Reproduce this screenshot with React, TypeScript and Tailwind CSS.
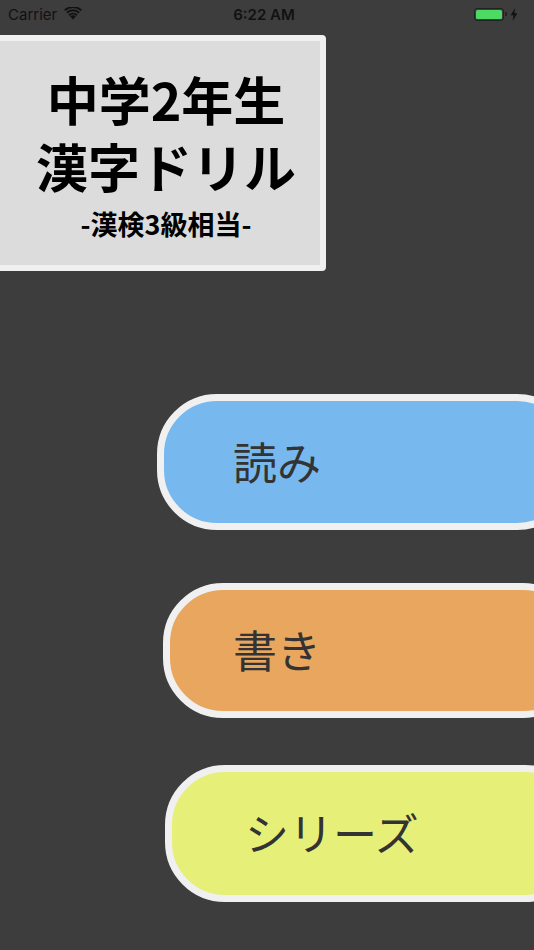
import React from "react";

const jp = { fontFamily: '"Noto Sans CJK JP", "Noto Sans", sans-serif' };
const sys = { fontFamily: 'Inter, "Liberation Sans", sans-serif' };

function Wifi() {
  return (
    <svg width="18" height="13" viewBox="0 0 18 13">
      <path d="M9 12.6 L6.2 9.5 A4 4 0 0 1 11.8 9.5 Z" fill="#111" />
      <path d="M4.4 7.5 A6.6 6.6 0 0 1 13.6 7.5 L12.3 8.9 A4.8 4.8 0 0 0 5.7 8.9 Z" fill="#111" />
      <path d="M2.2 5.1 A9.8 9.8 0 0 1 15.8 5.1 L14.5 6.5 A8 8 0 0 0 3.5 6.5 Z" fill="#111" />
      <path d="M0 2.7 A13 13 0 0 1 18 2.7 L16.7 4.1 A11.2 11.2 0 0 0 1.3 4.1 Z" fill="#111" />
    </svg>
  );
}

function StatusBar() {
  return (
    <div className="relative h-[28px] flex items-center px-[8px]" style={sys}>
      <span className="text-[15px] text-[#111] leading-none">Carrier</span>
      <span className="ml-[7px] mt-[-2px]"><Wifi /></span>
      <span className="absolute left-0 right-0 text-center text-[15px] font-semibold text-[#111] leading-none">
        <span className="mr-[6px]">6:22 AM</span>
      </span>
      <div className="ml-auto flex items-center mr-[8px]">
        <div className="w-[30px] h-[13px] rounded-[3px] border-[1.5px] border-[#222] p-[1px]">
          <div className="w-full h-full bg-[#4cd964] rounded-[1.5px]" />
        </div>
        <div className="w-[2px] h-[4px] bg-[#222] rounded-r-[1px] ml-[1px]" />
        <svg width="8" height="13" viewBox="0 0 8 13" className="ml-[3px]">
          <path d="M5.2 0 L0.6 7.3 L3.6 7.3 L2.6 13 L7.4 5.3 L4.4 5.3 Z" fill="#111" />
        </svg>
      </div>
    </div>
  );
}

function MenuButton({
  label,
  color,
  ml,
  pl,
  h,
  mt,
}: {
  label: string;
  color: string;
  ml: string;
  pl: string;
  h: string;
  mt: string;
}) {
  return (
    <div
      className={`${mt} ${ml} ${h} w-[420px] shrink-0 rounded-[60px] border-[7px] border-[#f0f0f0] flex items-center ${pl}`}
      style={{ backgroundColor: color }}
    >
      <span className="text-[44px] leading-none text-[#333333] mt-[-3px]" style={jp}>
        {label}
      </span>
    </div>
  );
}

export default function App() {
  return (
    <div className="w-[534px] h-[950px] overflow-hidden bg-[#3d3d3d] flex flex-col">
      <StatusBar />
      <div
        className="mt-[7px] -ml-[8px] w-[334px] h-[236px] shrink-0 border-[6px] border-[#f0f0f0] bg-[#dcdcdc] rounded-[4px] flex flex-col items-center pl-[14px] pt-[30px]"
        style={jp}
      >
        <div className="text-[52px] leading-[56px] font-bold text-black whitespace-nowrap">中学2年生</div>
        <div className="mt-[11px] text-[52px] leading-[56px] font-bold text-black whitespace-nowrap">漢字ドリル</div>
        <div className="mt-[14px] text-[27px] leading-[32px] font-bold text-black whitespace-nowrap">-漢検3級相当-</div>
      </div>
      <MenuButton label="読み" color="#77b9ee" mt="mt-[123px]" ml="ml-[157px]" pl="pl-[69px]" h="h-[136px]" />
      <MenuButton label="書き" color="#e8a65e" mt="mt-[53px]" ml="ml-[163px]" pl="pl-[63px]" h="h-[135px]" />
      <MenuButton label="シリーズ" color="#e6ef78" mt="mt-[47px]" ml="ml-[165px]" pl="pl-[73px]" h="h-[137px]" />
    </div>
  );
}
